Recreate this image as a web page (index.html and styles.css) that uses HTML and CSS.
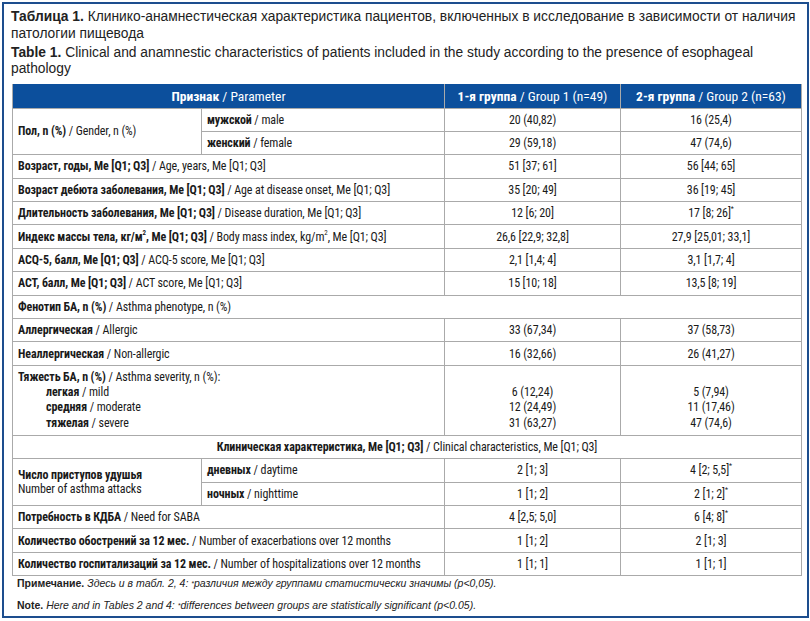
FILE: index.html
```html
<!DOCTYPE html>
<html lang="ru">
<head>
    <meta charset="UTF-8">
    <title>Таблица 1</title>
    <link rel="stylesheet" href="styles.css">
</head>
<body>
    <div class="frame">
        <p class="caption"><b>Таблица 1.</b> Клинико-анамнестическая характеристика пациентов, включенных в исследование в зависимости от наличия<br>патологии пищевода</p>
        <p class="caption en"><b>Table 1.</b> Clinical and anamnestic characteristics of patients included in the study according to the presence of esophageal<br>pathology</p>

        <table class="data">
            <colgroup>
                <col class="c1"><col class="c2"><col class="c3"><col class="c4">
            </colgroup>
            <thead>
                <tr>
                    <th colspan="2"><b>Признак</b> / Parameter</th>
                    <th><b>1-я группа</b> / Group 1 (n=49)</th>
                    <th><b>2-я группа</b> / Group 2 (n=63)</th>
                </tr>
            </thead>
            <tbody>
                <tr>
                    <td rowspan="2"><b>Пол, n (%)</b> / Gender, n (%)</td>
                    <td><b>мужской</b> / male</td>
                    <td class="v">20 (40,82)</td>
                    <td class="v">16 (25,4)</td>
                </tr>
                <tr>
                    <td><b>женский</b> / female</td>
                    <td class="v">29 (59,18)</td>
                    <td class="v">47 (74,6)</td>
                </tr>
                <tr>
                    <td colspan="2"><b>Возраст, годы, Me [Q1; Q3]</b> / Age, years, Me [Q1; Q3]</td>
                    <td class="v">51 [37; 61]</td>
                    <td class="v">56 [44; 65]</td>
                </tr>
                <tr>
                    <td colspan="2"><b>Возраст дебюта заболевания, Me [Q1; Q3]</b> / Age at disease onset, Me [Q1; Q3]</td>
                    <td class="v">35 [20; 49]</td>
                    <td class="v">36 [19; 45]</td>
                </tr>
                <tr>
                    <td colspan="2"><b>Длительность заболевания, Me [Q1; Q3]</b> / Disease duration, Me [Q1; Q3]</td>
                    <td class="v">12 [6; 20]</td>
                    <td class="v">17 [8; 26]<sup>*</sup></td>
                </tr>
                <tr>
                    <td colspan="2"><b>Индекс массы тела, кг/м<sup>2</sup>, Me [Q1; Q3]</b> / Body mass index, kg/m<sup>2</sup>, Me [Q1; Q3]</td>
                    <td class="v">26,6 [22,9; 32,8]</td>
                    <td class="v">27,9 [25,01; 33,1]</td>
                </tr>
                <tr>
                    <td colspan="2"><b>ACQ-5, балл, Me [Q1; Q3]</b> / ACQ-5 score, Me [Q1; Q3]</td>
                    <td class="v">2,1 [1,4; 4]</td>
                    <td class="v">3,1 [1,7; 4]</td>
                </tr>
                <tr>
                    <td colspan="2"><b>ACT, балл, Me [Q1; Q3]</b> / ACT score, Me [Q1; Q3]</td>
                    <td class="v">15 [10; 18]</td>
                    <td class="v">13,5 [8; 19]</td>
                </tr>
                <tr>
                    <td colspan="4"><b>Фенотип БА, n (%)</b> / Asthma phenotype, n (%)</td>
                </tr>
                <tr>
                    <td colspan="2"><b>Аллергическая</b> / Allergic</td>
                    <td class="v">33 (67,34)</td>
                    <td class="v">37 (58,73)</td>
                </tr>
                <tr>
                    <td colspan="2"><b>Неаллергическая</b> / Non-allergic</td>
                    <td class="v">16 (32,66)</td>
                    <td class="v">26 (41,27)</td>
                </tr>
                <tr class="multi">
                    <td colspan="2">
                        <b>Тяжесть БА, n (%)</b> / Asthma severity, n (%):
                        <span class="sub"><b>легкая</b> / mild</span>
                        <span class="sub"><b>средняя</b> / moderate</span>
                        <span class="sub"><b>тяжелая</b> / severe</span>
                    </td>
                    <td class="v">&nbsp;<br>6 (12,24)<br>12 (24,49)<br>31 (63,27)</td>
                    <td class="v">&nbsp;<br>5 (7,94)<br>11 (17,46)<br>47 (74,6)</td>
                </tr>
                <tr>
                    <td colspan="4" class="section"><b>Клиническая характеристика, Me [Q1; Q3]</b> / Clinical characteristics, Me [Q1; Q3]</td>
                </tr>
                <tr>
                    <td rowspan="2"><b>Число приступов удушья</b><br>Number of asthma attacks</td>
                    <td><b>дневных</b> / daytime</td>
                    <td class="v">2 [1; 3]</td>
                    <td class="v">4 [2; 5,5]<sup>*</sup></td>
                </tr>
                <tr>
                    <td><b>ночных</b> / nighttime</td>
                    <td class="v">1 [1; 2]</td>
                    <td class="v">2 [1; 2]<sup>*</sup></td>
                </tr>
                <tr>
                    <td colspan="2"><b>Потребность в КДБА</b> / Need for SABA</td>
                    <td class="v">4 [2,5; 5,0]</td>
                    <td class="v">6 [4; 8]<sup>*</sup></td>
                </tr>
                <tr>
                    <td colspan="2"><b>Количество обострений за 12 мес.</b> / Number of exacerbations over 12 months</td>
                    <td class="v">1 [1; 2]</td>
                    <td class="v">2 [1; 3]</td>
                </tr>
                <tr>
                    <td colspan="2"><b>Количество госпитализаций за 12 мес.</b> / Number of hospitalizations over 12 months</td>
                    <td class="v">1 [1; 1]</td>
                    <td class="v">1 [1; 1]</td>
                </tr>
            </tbody>
        </table>

        <p class="note"><b>Примечание.</b> <i>Здесь и в табл. 2, 4: <sup>*</sup>различия между группами статистически значимы (p&lt;0,05).</i></p>
        <p class="note"><b>Note.</b> <i>Here and in Tables 2 and 4: <sup>*</sup>differences between groups are statistically significant (p&lt;0.05).</i></p>
    </div>
</body>
</html>
```

FILE: styles.css
```css
*{margin:0;padding:0;box-sizing:border-box}
body{background:#fff;color:#1a1a1a;font-family:"Liberation Sans",Arial,sans-serif}
.frame{margin:2px 1px 0 2px;height:616px;border:2px solid #1d4e8e;padding:4px 5px 0 7px}
.caption{font-size:13.8px;line-height:17px;color:#222;white-space:nowrap}
.caption.en{margin-top:3px;line-height:16px}
.caption b{font-weight:bold}

.data{margin-top:7px;margin-left:1px;width:789px;table-layout:fixed;border-collapse:collapse;font-family:"Roboto Condensed","Liberation Sans Narrow","Open Sans",sans-serif;font-stretch:75%;font-size:12px;letter-spacing:-0.1px;color:#1a1a1a}
.data col.c1{width:189px}
.data col.c2{width:243px}
.data col.c3{width:176px}
.data col.c4{width:181px}
.data th{background:#0c4f9c;color:#fff;font-weight:normal;height:24px;font-size:13.5px;letter-spacing:0;border:1px solid #aaa;border-top:none;white-space:nowrap}
.data th b{font-weight:bold}
.data td{height:23.4px;padding:0 5px;border:1px solid #aaa;vertical-align:middle;line-height:14px;white-space:nowrap}
.data td.v{text-align:center}
.data td.section{text-align:center}
.data sup{font-size:7px;vertical-align:top;line-height:1}
.multi td{height:70px;line-height:15.3px;padding-top:3px;padding-bottom:3px}
.multi .sub{display:block;padding-left:28px}

.note{font-size:10.5px;line-height:13px;margin:1px 0 0 6px;color:#222}
.note + .note{margin-top:9px}
.note sup{font-size:7px;vertical-align:top}
```
